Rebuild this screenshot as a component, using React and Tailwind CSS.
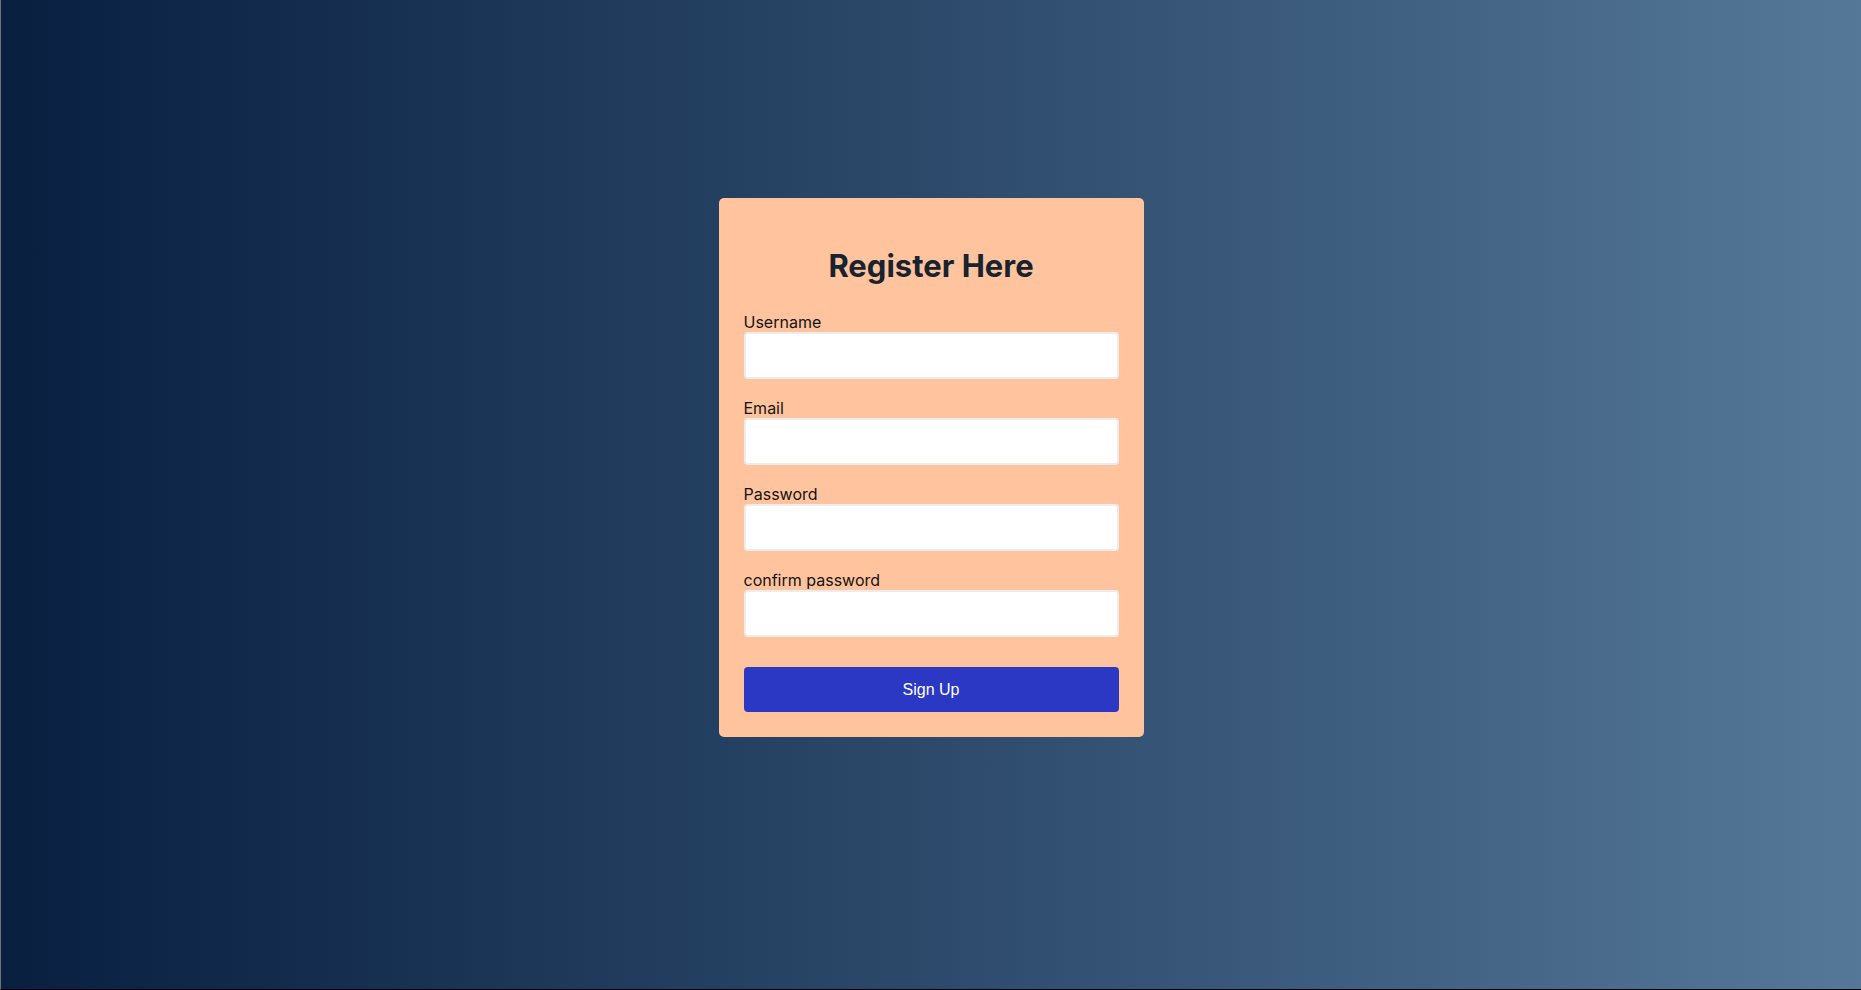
import React from 'react';

const fields = [
  { id: 'username', label: 'Username', type: 'text' },
  { id: 'email', label: 'Email', type: 'email' },
  { id: 'password', label: 'Password', type: 'password' },
  { id: 'confirm', label: 'confirm password', type: 'password' },
];

function App() {
  return (
    <div className="min-h-screen h-[990px] w-full flex justify-center items-start pt-[198px] bg-gradient-to-r from-[#081f40] to-[#557899] border-l border-l-[#6f7378] border-b border-b-black font-['Inter',sans-serif]">
      <form
        onSubmit={e => e.preventDefault()}
        className="w-[425px] bg-[#ffc39e] rounded-[5px] px-[25px] pt-[50px] pb-[25px] flex flex-col"
      >
        <h2 className="text-center text-[31px] leading-[36px] font-bold text-[#17232f] mb-[28px]">
          Register Here
        </h2>

        {fields.map(f => (
          <div key={f.id} className="flex flex-col mb-[19px]">
            <label htmlFor={f.id} className="text-[16px] leading-[20px] text-[#141414]">
              {f.label}
            </label>
            <input
              id={f.id}
              type={f.type}
              className="h-[47px] w-full bg-white border-2 border-[#ececec] rounded-[4px] px-3 outline-none"
            />
          </div>
        ))}

        <button
          type="submit"
          className="mt-[11px] h-[45px] w-full rounded-[4px] bg-[#2a38c4] text-white text-[16px] font-['Liberation_Sans',Arial,sans-serif]"
        >
          Sign Up
        </button>
      </form>
    </div>
  );
}

export default App;
